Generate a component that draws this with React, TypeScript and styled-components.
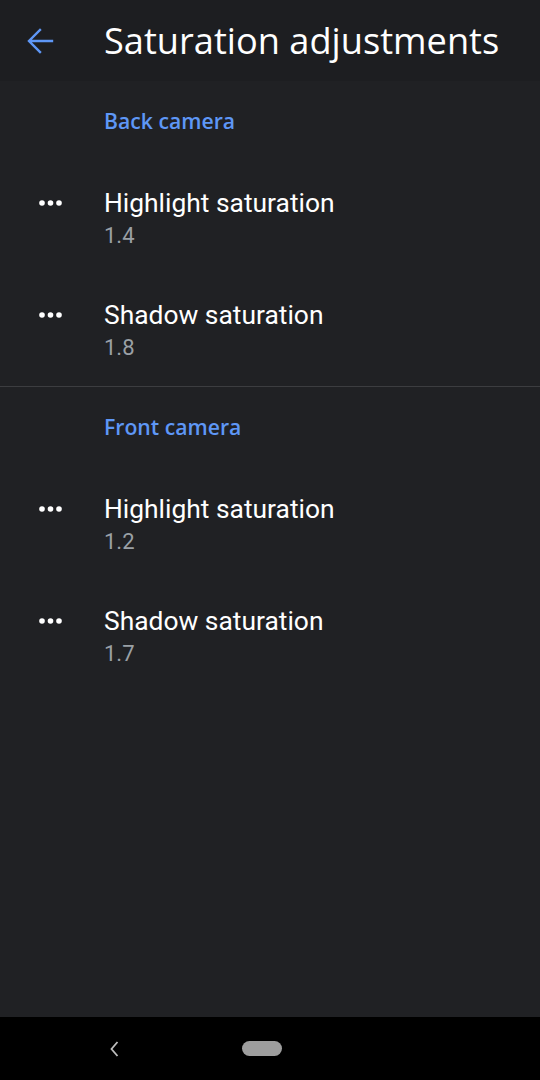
import styled, { createGlobalStyle } from 'styled-components';

const GlobalStyle = createGlobalStyle`
  html, body {
    margin: 0;
    padding: 0;
    background: #000;
  }
  * {
    box-sizing: border-box;
  }
`;

interface Setting {
  title: string;
  value: string;
}

interface Section {
  label: string;
  items: Setting[];
}

const sections: Section[] = [
  {
    label: 'Back camera',
    items: [
      { title: 'Highlight saturation', value: '1.4' },
      { title: 'Shadow saturation', value: '1.8' },
    ],
  },
  {
    label: 'Front camera',
    items: [
      { title: 'Highlight saturation', value: '1.2' },
      { title: 'Shadow saturation', value: '1.7' },
    ],
  },
];

function BackArrow() {
  return (
    <svg width="28" height="28" viewBox="0 0 28 28" fill="none">
      <path
        d="M26 14H4M14 3L3 14l11 11"
        stroke="#5e97f6"
        strokeWidth="2.4"
        strokeLinecap="square"
      />
    </svg>
  );
}

function MoreDots() {
  return (
    <svg width="26" height="8" viewBox="0 0 26 8">
      <circle cx="4" cy="4" r="2.8" fill="#fff" />
      <circle cx="12.5" cy="4" r="2.8" fill="#fff" />
      <circle cx="21" cy="4" r="2.8" fill="#fff" />
    </svg>
  );
}

export default function App() {
  return (
    <>
      <GlobalStyle />
      <Screen>
        <TopBar>
          <IconButton>
            <BackArrow />
          </IconButton>
          <Title>Saturation adjustments</Title>
        </TopBar>
        <Content>
          {sections.map((section, i) => (
            <SectionBlock key={section.label} divided={i > 0}>
              <SectionLabel>{section.label}</SectionLabel>
              {section.items.map((item) => (
                <Row key={item.title}>
                  <RowIcon>
                    <MoreDots />
                  </RowIcon>
                  <RowText>
                    <RowTitle>{item.title}</RowTitle>
                    <RowValue>{item.value}</RowValue>
                  </RowText>
                </Row>
              ))}
            </SectionBlock>
          ))}
        </Content>
        <NavBar>
          <NavBack>
            <svg width="12" height="18" viewBox="0 0 12 18" fill="none">
              <path d="M9.5 2L3.5 9l6 7" stroke="#bdbdbd" strokeWidth="1.8" />
            </svg>
          </NavBack>
          <HomePill />
        </NavBar>
      </Screen>
    </>
  );
}

const Screen = styled.div`
  width: 540px;
  height: 1080px;
  display: flex;
  flex-direction: column;
  background: #202124;
  overflow: hidden;
`;

const TopBar = styled.div`
  height: 81px;
  display: flex;
  align-items: center;
  background: #1d1e21;
  padding-left: 26px;
`;

const IconButton = styled.div`
  width: 28px;
  height: 28px;
  display: flex;
  align-items: center;
  justify-content: center;
  margin-right: 50px;
`;

const Title = styled.h1`
  margin: 0 0 2px;
  font-family: 'Open Sans', 'Liberation Sans', sans-serif;
  font-weight: 400;
  font-size: 36.2px;
  color: #ffffff;
`;

const Content = styled.div`
  flex: 1;
`;

const SectionBlock = styled.div<{ divided: boolean }>`
  border-top: ${({ divided }) => (divided ? '1px solid #3c3d40' : 'none')};
`;

const SectionLabel = styled.div`
  height: 81px;
  display: flex;
  align-items: center;
  padding: 0 0 2px 104px;
  font-family: 'Open Sans', 'Liberation Sans', sans-serif;
  font-size: 21.2px;
  font-weight: 600;
  color: #5e97f6;
`;

const Row = styled.div`
  height: 112px;
  display: grid;
  grid-template-columns: 104px 1fr;
  align-content: center;
`;

const RowIcon = styled.div`
  height: 36px;
  display: flex;
  align-items: center;
  padding-left: 38px;
`;

const RowText = styled.div`
  display: flex;
  flex-direction: column;
`;

const RowTitle = styled.div`
  font-family: Roboto, 'Liberation Sans', sans-serif;
  font-size: 26.4px;
  line-height: 36px;
  color: #ffffff;
`;

const RowValue = styled.div`
  font-family: Roboto, 'Liberation Sans', sans-serif;
  font-size: 22px;
  line-height: 30px;
  color: #9aa0a6;
`;

const NavBar = styled.div`
  height: 63px;
  background: #000;
  display: flex;
  align-items: center;
  padding-left: 108px;
`;

const NavBack = styled.div`
  width: 12px;
  height: 18px;
  display: flex;
  margin-right: 122px;
`;

const HomePill = styled.div`
  width: 40px;
  height: 15px;
  border-radius: 8px;
  background: #9e9e9e;
`;
